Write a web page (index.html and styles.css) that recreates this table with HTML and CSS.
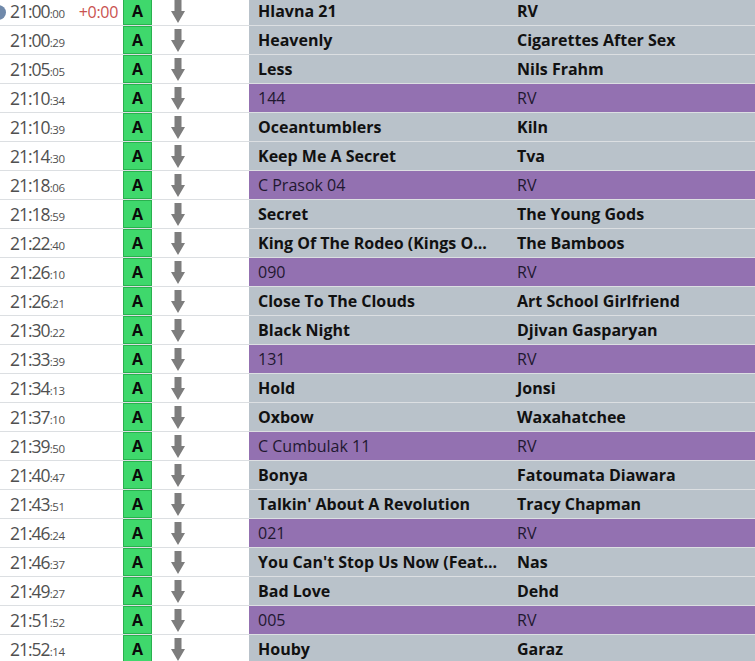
FILE: index.html
```html
<!DOCTYPE html>
<html>
<head>
<meta charset="utf-8">
<link rel="stylesheet" href="styles.css">
</head>
<body>
<div class="list">
  <div class="row">
    <span class="dot"></span>
    <div class="time"><span class="hm">21:00</span><span class="sec">:00</span><span class="offset">+0:00</span></div>
    <div class="badge">A</div>
    <div class="move"><svg class="arrow" viewBox="0 0 14 23"><path d="M3.5 0h7v11h3.5l-7 12l-7-12h3.5z"/></svg></div>
    <div class="title song">Hlavna 21</div><div class="artist song">RV</div>
  </div>
  <div class="row">
    <div class="time"><span class="hm">21:00</span><span class="sec">:29</span></div>
    <div class="badge">A</div>
    <div class="move"><svg class="arrow" viewBox="0 0 14 23"><path d="M3.5 0h7v11h3.5l-7 12l-7-12h3.5z"/></svg></div>
    <div class="title song">Heavenly</div><div class="artist song">Cigarettes After Sex</div>
  </div>
  <div class="row">
    <div class="time"><span class="hm">21:05</span><span class="sec">:05</span></div>
    <div class="badge">A</div>
    <div class="move"><svg class="arrow" viewBox="0 0 14 23"><path d="M3.5 0h7v11h3.5l-7 12l-7-12h3.5z"/></svg></div>
    <div class="title song">Less</div><div class="artist song">Nils Frahm</div>
  </div>
  <div class="row">
    <div class="time"><span class="hm">21:10</span><span class="sec">:34</span></div>
    <div class="badge">A</div>
    <div class="move"><svg class="arrow" viewBox="0 0 14 23"><path d="M3.5 0h7v11h3.5l-7 12l-7-12h3.5z"/></svg></div>
    <div class="title jingle">144</div><div class="artist jingle">RV</div>
  </div>
  <div class="row">
    <div class="time"><span class="hm">21:10</span><span class="sec">:39</span></div>
    <div class="badge">A</div>
    <div class="move"><svg class="arrow" viewBox="0 0 14 23"><path d="M3.5 0h7v11h3.5l-7 12l-7-12h3.5z"/></svg></div>
    <div class="title song">Oceantumblers</div><div class="artist song">Kiln</div>
  </div>
  <div class="row">
    <div class="time"><span class="hm">21:14</span><span class="sec">:30</span></div>
    <div class="badge">A</div>
    <div class="move"><svg class="arrow" viewBox="0 0 14 23"><path d="M3.5 0h7v11h3.5l-7 12l-7-12h3.5z"/></svg></div>
    <div class="title song">Keep Me A Secret</div><div class="artist song">Tva</div>
  </div>
  <div class="row">
    <div class="time"><span class="hm">21:18</span><span class="sec">:06</span></div>
    <div class="badge">A</div>
    <div class="move"><svg class="arrow" viewBox="0 0 14 23"><path d="M3.5 0h7v11h3.5l-7 12l-7-12h3.5z"/></svg></div>
    <div class="title jingle">C Prasok 04</div><div class="artist jingle">RV</div>
  </div>
  <div class="row">
    <div class="time"><span class="hm">21:18</span><span class="sec">:59</span></div>
    <div class="badge">A</div>
    <div class="move"><svg class="arrow" viewBox="0 0 14 23"><path d="M3.5 0h7v11h3.5l-7 12l-7-12h3.5z"/></svg></div>
    <div class="title song">Secret</div><div class="artist song">The Young Gods</div>
  </div>
  <div class="row">
    <div class="time"><span class="hm">21:22</span><span class="sec">:40</span></div>
    <div class="badge">A</div>
    <div class="move"><svg class="arrow" viewBox="0 0 14 23"><path d="M3.5 0h7v11h3.5l-7 12l-7-12h3.5z"/></svg></div>
    <div class="title song">King Of The Rodeo (Kings O...</div><div class="artist song">The Bamboos</div>
  </div>
  <div class="row">
    <div class="time"><span class="hm">21:26</span><span class="sec">:10</span></div>
    <div class="badge">A</div>
    <div class="move"><svg class="arrow" viewBox="0 0 14 23"><path d="M3.5 0h7v11h3.5l-7 12l-7-12h3.5z"/></svg></div>
    <div class="title jingle">090</div><div class="artist jingle">RV</div>
  </div>
  <div class="row">
    <div class="time"><span class="hm">21:26</span><span class="sec">:21</span></div>
    <div class="badge">A</div>
    <div class="move"><svg class="arrow" viewBox="0 0 14 23"><path d="M3.5 0h7v11h3.5l-7 12l-7-12h3.5z"/></svg></div>
    <div class="title song">Close To The Clouds</div><div class="artist song">Art School Girlfriend</div>
  </div>
  <div class="row">
    <div class="time"><span class="hm">21:30</span><span class="sec">:22</span></div>
    <div class="badge">A</div>
    <div class="move"><svg class="arrow" viewBox="0 0 14 23"><path d="M3.5 0h7v11h3.5l-7 12l-7-12h3.5z"/></svg></div>
    <div class="title song">Black Night</div><div class="artist song">Djivan Gasparyan</div>
  </div>
  <div class="row">
    <div class="time"><span class="hm">21:33</span><span class="sec">:39</span></div>
    <div class="badge">A</div>
    <div class="move"><svg class="arrow" viewBox="0 0 14 23"><path d="M3.5 0h7v11h3.5l-7 12l-7-12h3.5z"/></svg></div>
    <div class="title jingle">131</div><div class="artist jingle">RV</div>
  </div>
  <div class="row">
    <div class="time"><span class="hm">21:34</span><span class="sec">:13</span></div>
    <div class="badge">A</div>
    <div class="move"><svg class="arrow" viewBox="0 0 14 23"><path d="M3.5 0h7v11h3.5l-7 12l-7-12h3.5z"/></svg></div>
    <div class="title song">Hold</div><div class="artist song">Jonsi</div>
  </div>
  <div class="row">
    <div class="time"><span class="hm">21:37</span><span class="sec">:10</span></div>
    <div class="badge">A</div>
    <div class="move"><svg class="arrow" viewBox="0 0 14 23"><path d="M3.5 0h7v11h3.5l-7 12l-7-12h3.5z"/></svg></div>
    <div class="title song">Oxbow</div><div class="artist song">Waxahatchee</div>
  </div>
  <div class="row">
    <div class="time"><span class="hm">21:39</span><span class="sec">:50</span></div>
    <div class="badge">A</div>
    <div class="move"><svg class="arrow" viewBox="0 0 14 23"><path d="M3.5 0h7v11h3.5l-7 12l-7-12h3.5z"/></svg></div>
    <div class="title jingle">C Cumbulak 11</div><div class="artist jingle">RV</div>
  </div>
  <div class="row">
    <div class="time"><span class="hm">21:40</span><span class="sec">:47</span></div>
    <div class="badge">A</div>
    <div class="move"><svg class="arrow" viewBox="0 0 14 23"><path d="M3.5 0h7v11h3.5l-7 12l-7-12h3.5z"/></svg></div>
    <div class="title song">Bonya</div><div class="artist song">Fatoumata Diawara</div>
  </div>
  <div class="row">
    <div class="time"><span class="hm">21:43</span><span class="sec">:51</span></div>
    <div class="badge">A</div>
    <div class="move"><svg class="arrow" viewBox="0 0 14 23"><path d="M3.5 0h7v11h3.5l-7 12l-7-12h3.5z"/></svg></div>
    <div class="title song">Talkin' About A Revolution</div><div class="artist song">Tracy Chapman</div>
  </div>
  <div class="row">
    <div class="time"><span class="hm">21:46</span><span class="sec">:24</span></div>
    <div class="badge">A</div>
    <div class="move"><svg class="arrow" viewBox="0 0 14 23"><path d="M3.5 0h7v11h3.5l-7 12l-7-12h3.5z"/></svg></div>
    <div class="title jingle">021</div><div class="artist jingle">RV</div>
  </div>
  <div class="row">
    <div class="time"><span class="hm">21:46</span><span class="sec">:37</span></div>
    <div class="badge">A</div>
    <div class="move"><svg class="arrow" viewBox="0 0 14 23"><path d="M3.5 0h7v11h3.5l-7 12l-7-12h3.5z"/></svg></div>
    <div class="title song">You Can't Stop Us Now (Feat...</div><div class="artist song">Nas</div>
  </div>
  <div class="row">
    <div class="time"><span class="hm">21:49</span><span class="sec">:27</span></div>
    <div class="badge">A</div>
    <div class="move"><svg class="arrow" viewBox="0 0 14 23"><path d="M3.5 0h7v11h3.5l-7 12l-7-12h3.5z"/></svg></div>
    <div class="title song">Bad Love</div><div class="artist song">Dehd</div>
  </div>
  <div class="row">
    <div class="time"><span class="hm">21:51</span><span class="sec">:52</span></div>
    <div class="badge">A</div>
    <div class="move"><svg class="arrow" viewBox="0 0 14 23"><path d="M3.5 0h7v11h3.5l-7 12l-7-12h3.5z"/></svg></div>
    <div class="title jingle">005</div><div class="artist jingle">RV</div>
  </div>
  <div class="row">
    <div class="time"><span class="hm">21:52</span><span class="sec">:14</span></div>
    <div class="badge">A</div>
    <div class="move"><svg class="arrow" viewBox="0 0 14 23"><path d="M3.5 0h7v11h3.5l-7 12l-7-12h3.5z"/></svg></div>
    <div class="title song">Houby</div><div class="artist song">Garaz</div>
  </div>
</div>
</body>
</html>
```
FILE: styles.css
```css
html, body {
  margin: 0;
  padding: 0;
  background: #ffffff;
  overflow: hidden;
}
body {
  font-family: "Open Sans", "Noto Sans", sans-serif;
}
.list {
  margin-top: -3px;
  display: flex;
  flex-direction: column;
}
.row {
  position: relative;
  display: grid;
  grid-template-columns: 123px 29px 97px 259px 1fr;
  height: 28px;
  border-bottom: 1px solid #dcdfe2;
}
.dot {
  position: absolute;
  left: -9px;
  top: 8px;
  width: 15px;
  height: 15px;
  border-radius: 50%;
  background: #7089aa;
}
.time {
  display: flex;
  align-items: baseline;
  padding-left: 10px;
  padding-top: 2px;
  color: #505050;
  white-space: nowrap;
}
.hm {
  font-size: 17.5px;
  letter-spacing: -1px;
}
.sec {
  font-size: 11.5px;
  letter-spacing: -0.3px;
}
.offset {
  margin-left: auto;
  margin-right: 5px;
  font-size: 16px;
  letter-spacing: -0.3px;
  color: #c9524f;
}
.badge {
  background: #3fd86c;
  border: 1px solid #29b14e;
  display: flex;
  align-items: center;
  justify-content: center;
  font-weight: 700;
  font-size: 16px;
  color: #0a0a0a;
}
.move {
  display: flex;
  align-items: center;
  padding-left: 19px;
}
.arrow {
  width: 14px;
  height: 23px;
  fill: #7d7d7d;
}
.title, .artist {
  display: flex;
  align-items: center;
  padding-left: 9px;
  min-width: 0;
  overflow: hidden;
  white-space: nowrap;
  font-size: 16px;
}
.song {
  background: #b9c2ca;
  font-weight: 700;
  color: #111111;
}
.jingle {
  background: #9371b1;
  font-weight: 400;
  color: #1f1830;
}
```
